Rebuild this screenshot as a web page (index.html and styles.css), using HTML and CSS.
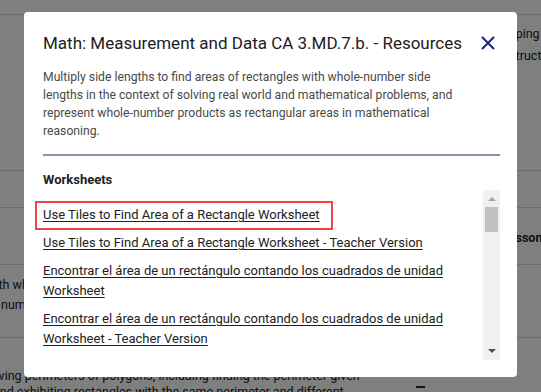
FILE: index.html
```html
<!DOCTYPE html>
<html lang="en">
<head>
<meta charset="utf-8">
<title>Resources</title>
<link rel="stylesheet" href="styles.css">
</head>
<body>
<div class="page">
  <div class="bg-row bg-top"></div>
  <div class="bg-row bg-r1">
    <div class="bg-cell bg-right1">Grouping</div>
    <div class="bg-cell bg-right1b">Constructing</div>
  </div>
  <div class="bg-row bg-r2"></div>
  <div class="bg-row bg-r3">
    <div class="bg-cell bg-right3">Lesson</div>
  </div>
  <div class="bg-row bg-r4">
    <div class="bg-cell bg-left4a">with whole-number side lengths</div>
    <div class="bg-cell bg-left4b">numbers</div>
  </div>
  <div class="bg-row bg-r5">
    <div class="bg-cell bg-left5a">Solving perimeters of polygons, including finding the perimeter given</div>
    <div class="bg-cell bg-left5b">and exhibiting rectangles with the same perimeter and different</div>
    <span class="bg-dash"></span>
  </div>
</div>

<div class="overlay">
  <div class="modal">
    <div class="modal-head">
      <h2 class="modal-title">Math: Measurement and Data CA 3.MD.7.b. - Resources</h2>
      <button class="close" aria-label="Close">
        <svg width="14" height="14" viewBox="0 0 14 14"><path d="M1 1 L13 13 M13 1 L1 13" stroke="#1c2480" stroke-width="2" fill="none"/></svg>
      </button>
    </div>
    <p class="desc">Multiply side lengths to find areas of rectangles with whole-number side<br>lengths in the context of solving real world and mathematical problems, and<br>represent whole-number products as rectangular areas in mathematical<br>reasoning.</p>
    <div class="divider"></div>
    <h3 class="section">Worksheets</h3>
    <div class="list-wrap">
      <ul class="list">
        <li class="item"><a class="link link-hl" href="#">Use Tiles to Find Area of a Rectangle Worksheet</a></li>
        <li class="item"><a class="link" href="#">Use Tiles to Find Area of a Rectangle Worksheet - Teacher Version</a></li>
        <li class="item"><a class="link" href="#">Encontrar el área de un rectángulo contando los cuadrados de unidad Worksheet</a></li>
        <li class="item"><a class="link" href="#">Encontrar el área de un rectángulo contando los cuadrados de unidad Worksheet - Teacher Version</a></li>
      </ul>
      <div class="scrollbar">
        <span class="arrow arrow-up"></span>
        <span class="thumb"></span>
        <span class="track-fill"></span>
        <span class="arrow arrow-down"></span>
      </div>
    </div>
  </div>
</div>
</body>
</html>
```

FILE: styles.css
```css
* { box-sizing: border-box; }
html, body {
  margin: 0;
  padding: 0;
  width: 541px;
  height: 392px;
  overflow: hidden;
  background: #ffffff;
  font-family: Roboto, "Liberation Sans", Arial, sans-serif;
}

/* background page */
.page {
  width: 541px;
  height: 392px;
  color: #222;
  font-size: 12.5px;
}
.bg-row {
  border-bottom: 1px solid #d6d6d6;
  position: relative;
  white-space: nowrap;
}
.bg-top { height: 15px; }
.bg-r1 { height: 156px; padding-top: 8px; line-height: 22px; }
.bg-r2 { height: 37px; }
.bg-r3 { height: 57px; padding-top: 19px; line-height: 22px; font-weight: 700; }
.bg-r4 { height: 73px; padding-top: 10px; line-height: 20px; }
.bg-r5 { border-bottom: none; padding-top: 30px; line-height: 16px; }
.bg-right1 { padding-left: 489px; }
.bg-right1b { padding-left: 487px; }
.bg-right3 { padding-left: 502px; }
.bg-left4a { margin-left: -14px; }
.bg-left4b { margin-left: 1px; }
.bg-left5a { margin-left: -19px; }
.bg-left5b { margin-left: -7px; }
.bg-dash {
  position: absolute;
  left: 416px;
  top: 48px;
  width: 9px;
  height: 2px;
  background: #222;
}

/* overlay + modal */
.overlay {
  position: fixed;
  inset: 0;
  background: rgba(0, 0, 0, 0.5);
  display: flex;
  justify-content: center;
  align-items: flex-start;
  padding-top: 12px;
}
.modal {
  width: 493px;
  height: 365px;
  background: #fff;
  border-radius: 4px;
  padding: 19px 17px 17px 19px;
  display: flex;
  flex-direction: column;
}
.modal-head {
  display: flex;
  align-items: center;
  justify-content: space-between;
}
.modal-title {
  margin: 0;
  font-size: 17px;
  line-height: 24px;
  font-weight: 400;
  color: #212121;
  white-space: nowrap;
}
.close {
  border: 0;
  background: none;
  padding: 0;
  margin: 0 5px 0 0;
  width: 14px;
  height: 14px;
  display: flex;
}
.desc {
  margin: 13px 0 0 0;
  font-size: 12.2px;
  line-height: 18px;
  color: #4a4a4a;
  white-space: nowrap;
}
.divider {
  margin-top: 14px;
  height: 2px;
  background: #938fa8;
}
.section {
  margin: 15px 0 0 0;
  font-size: 13px;
  line-height: 18px;
  font-weight: 700;
  color: #222;
}
.list-wrap {
  margin: 1px 0 0 -10px;
  flex: 1;
  display: flex;
  min-height: 0;
}
.list {
  list-style: none;
  margin: 0;
  padding: 15px 0 0 10px;
  flex: 1;
  overflow: hidden;
  display: flex;
  flex-direction: column;
  gap: 8px;
}
.item {
  font-size: 13px;
  line-height: 20px;
}
.link {
  color: #222;
  text-decoration: underline;
  text-underline-offset: 2px;
}
.link-hl {
  position: relative;
  display: inline-block;
}
.link-hl::after {
  content: "";
  position: absolute;
  top: -4px;
  bottom: -5px;
  left: -8px;
  right: -13px;
  border: 2px solid #ee4646;
}

/* fake scrollbar */
.scrollbar {
  width: 17px;
  background: #f1f1f1;
  display: flex;
  flex-direction: column;
  align-items: center;
}
.arrow {
  width: 0;
  height: 0;
  border-left: 4px solid transparent;
  border-right: 4px solid transparent;
}
.arrow-up {
  margin-top: 7px;
  border-bottom: 4px solid #a3a3a3;
}
.arrow-down {
  margin-bottom: 7px;
  border-top: 4px solid #505050;
}
.thumb {
  margin-top: 6px;
  width: 13px;
  height: 25px;
  background: #c1c1c1;
}
.track-fill { flex: 1; }
```
